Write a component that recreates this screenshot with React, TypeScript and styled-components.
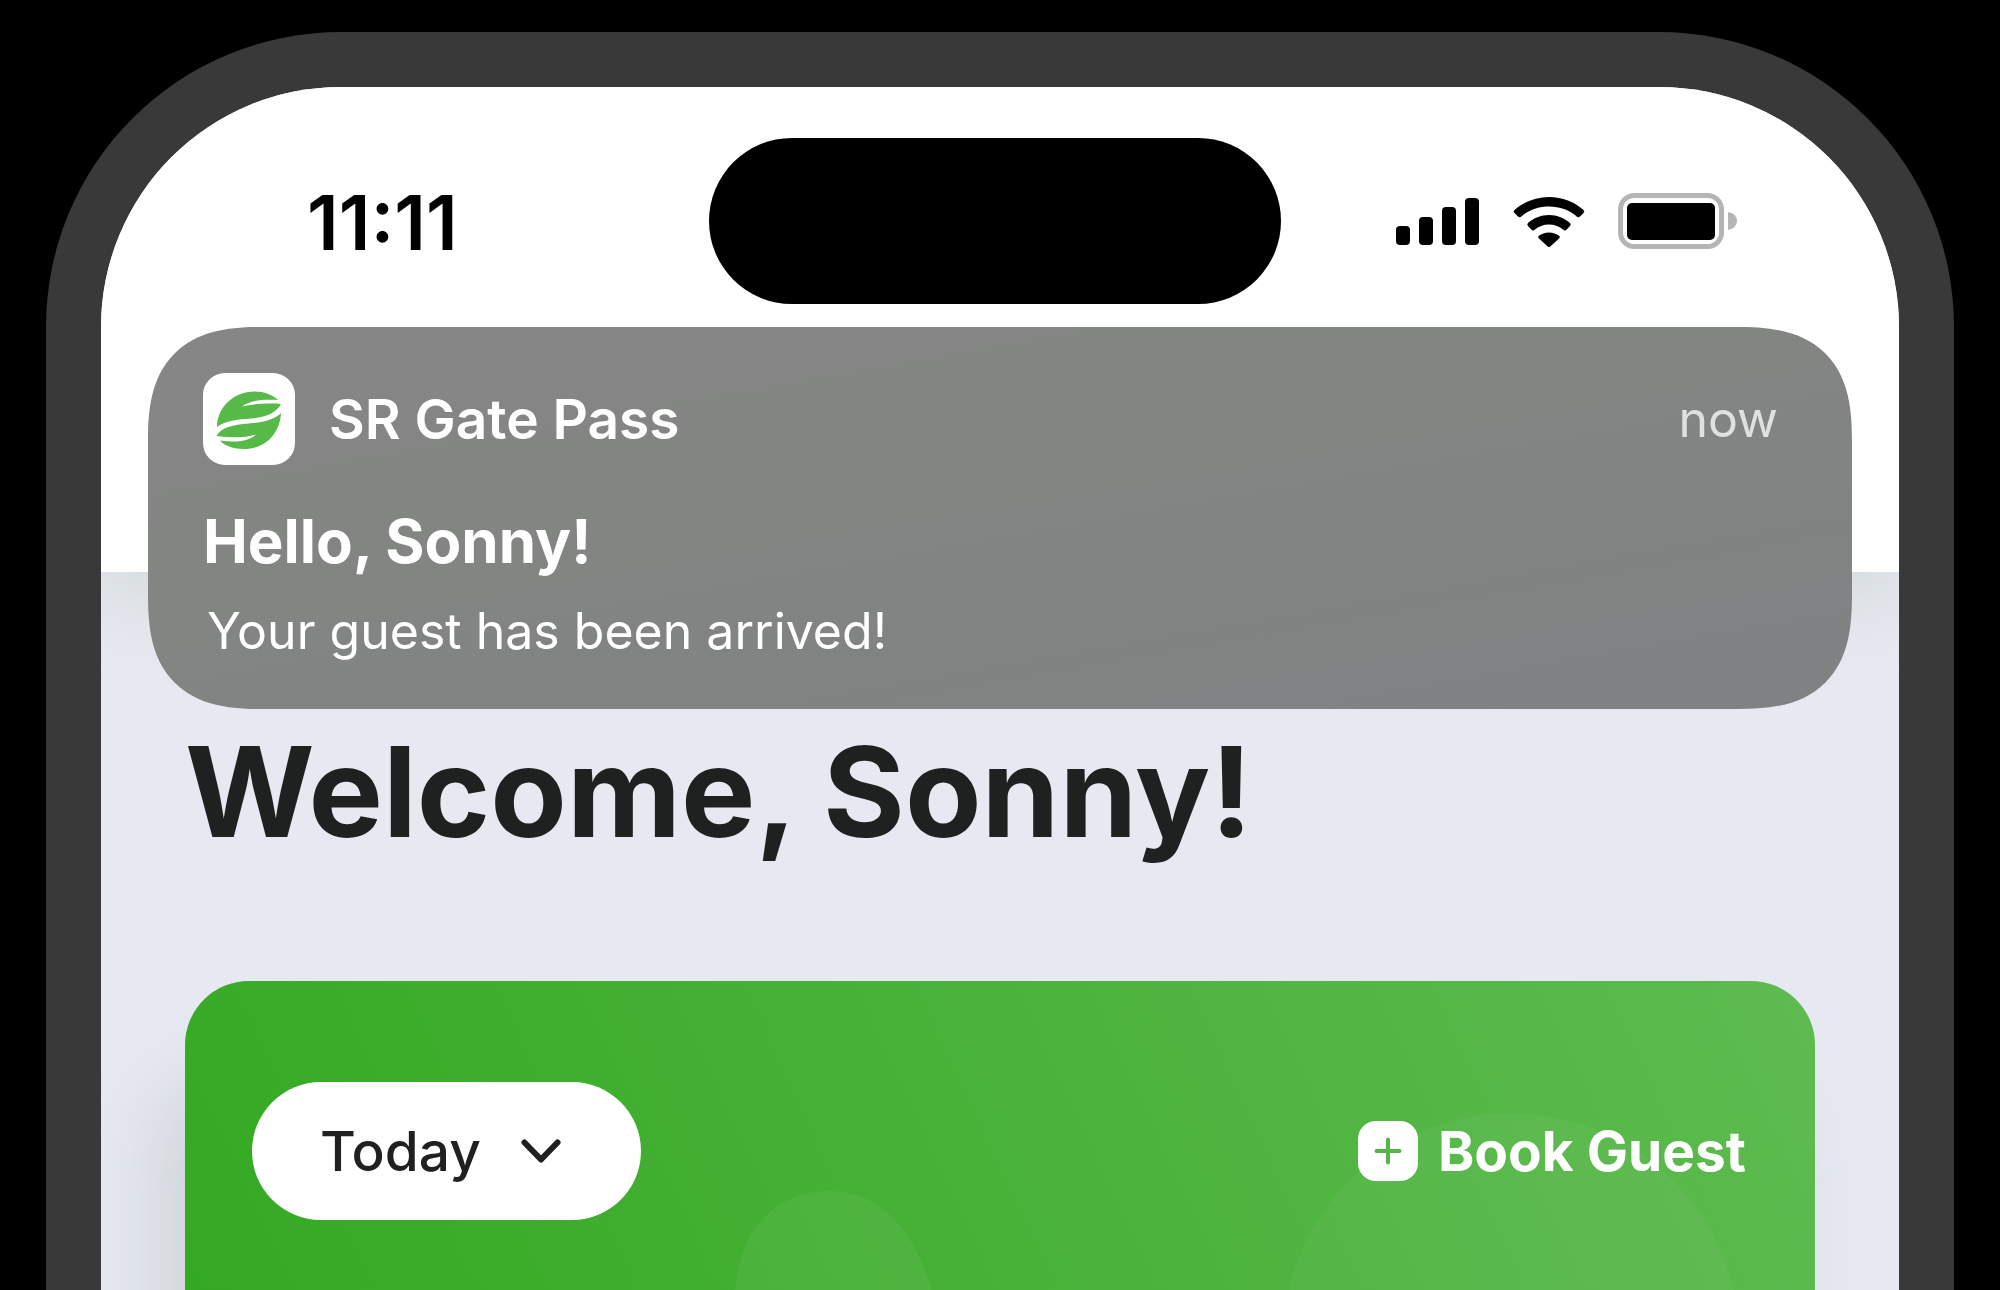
import React from "react";
import styled, { createGlobalStyle } from "styled-components";

const GlobalStyle = createGlobalStyle`
  *, *::before, *::after { box-sizing: border-box; }
  html, body { margin: 0; background: #000; }
  body {
    font-family: Inter, "Liberation Sans", sans-serif;
    -webkit-font-smoothing: antialiased;
  }
  h1, h2, p { margin: 0; }
`;

const Page = styled.div`
  display: flex;
  height: 100vh;
  padding: 32px 46px 0;
  background: #000;
  overflow: hidden;
`;

const Phone = styled.main`
  position: relative;
  display: flex;
  flex-direction: column;
  flex: 1;
  min-width: 0;
  border: 55px solid #393939;
  border-bottom: 0;
  border-radius: 295px 295px 0 0;
  background: #e6e9f1;
  overflow: hidden;
`;

const Header = styled.header`
  position: relative;
  flex: none;
  padding: 51px 10px 268px 0;
  background: #fff;
  box-shadow: 0 16px 80px rgba(200, 206, 200, 0.7);
`;

const StatusBar = styled.div`
  display: grid;
  grid-template-columns: 1fr 572px 1fr;
  height: 166px;
`;

const Time = styled.time`
  align-self: center;
  padding: 4px 0 0 206px;
  font-size: 75px;
  line-height: 88px;
  font-weight: 600;
  color: #000;
`;

const Island = styled.div`
  border-radius: 83px;
  background: #000;
`;

const StatusIcons = styled.div`
  display: flex;
  align-items: center;
  justify-content: flex-end;
  gap: 33px;
  padding-right: 151px;
`;

const Notification = styled.section`
  position: absolute;
  top: 240px;
  left: 47px;
  right: 47px;
  display: flex;
  flex-direction: column;
  padding: 46px 74px 46px 55px;
  height: 382px;
  border-radius: 92px;
  background: linear-gradient(170deg, #868686 0%, #828582 45%, #808184 100%);
  color: #fff;

  @supports (corner-shape: superellipse(1.4)) {
    border-radius: 115px;
    corner-shape: superellipse(1.4);
  }
`;

const NotificationTop = styled.div`
  display: flex;
  align-items: center;
  gap: 34px;
`;

const AppIcon = styled.div`
  display: grid;
  place-items: center;
  width: 92px;
  height: 92px;
  border-radius: 22px;
  background: #fff;
`;

const AppName = styled.span`
  flex: 1;
  font-size: 55px;
  line-height: 64px;
  font-weight: 600;
`;

const When = styled.time`
  font-size: 50px;
  line-height: 64px;
  font-weight: 400;
  color: #dfe1df;
`;

const NotificationTitle = styled.h2`
  margin-top: 36px;
  font-size: 60px;
  line-height: 80px;
  font-weight: 700;
`;

const NotificationText = styled.p`
  margin-top: 18px;
  padding-left: 4px;
  font-size: 50px;
  line-height: 64px;
  font-weight: 400;
`;

const Content = styled.div`
  position: relative;
  display: flex;
  flex-direction: column;
  flex: 1;
  padding: 140px 84px 0;
`;

const Welcome = styled.h1`
  font-size: 125px;
  line-height: 160px;
  font-weight: 700;
  color: #1f2020;
`;

const Card = styled.section`
  position: relative;
  flex: none;
  margin-top: 109px;
  height: 700px;
  padding: 101px 69px 0 67px;
  border-radius: 64px;
  background: linear-gradient(65deg, #30a71e 0%, #5ebb50 100%);
  box-shadow: -30px 100px 70px rgba(150, 160, 150, 0.25);
`;

const CardShapes = styled.svg`
  position: absolute;
  inset: 0;
`;

const CardBar = styled.div`
  position: relative;
  display: flex;
  align-items: center;
  justify-content: space-between;
`;

const DayPicker = styled.div`
  position: relative;
`;

const DaySelect = styled.select`
  appearance: none;
  height: 138px;
  padding: 0 160px 0 68px;
  border: 0;
  border-radius: 69px;
  background: #fff;
  font: inherit;
  font-size: 55px;
  line-height: 72px;
  font-weight: 500;
  color: #1f2020;
`;

const Chevron = styled.svg`
  position: absolute;
  top: 57px;
  right: 80px;
  pointer-events: none;
`;

const BookButton = styled.button`
  display: flex;
  align-items: center;
  gap: 20px;
  padding: 0;
  border: 0;
  background: none;
  font: inherit;
  font-size: 55px;
  line-height: 72px;
  font-weight: 700;
  color: #fff;
`;

const SignalIcon = () => (
  <svg width="84" height="47" viewBox="0 0 84 47" aria-hidden="true">
    <rect x="0" y="28" width="14" height="19" rx="4" />
    <rect x="23" y="19" width="14" height="28" rx="4" />
    <rect x="46" y="9" width="14" height="38" rx="4" />
    <rect x="69" y="0" width="14" height="47" rx="4" />
  </svg>
);

const WifiIcon = () => (
  <svg width="72" height="54" viewBox="0 -3 72 54" aria-hidden="true">
    <path d="M36 0C49.500 0 61.500 5 70.500 13Q72 14.500 70.500 16L67 19.500Q65.500 21 64 19.700C56.500 13 46.500 9.500 36 9.500S15.500 13 8 19.700Q6.500 21 5 19.500L1.500 16Q0 14.500 1.500 13C10.500 5 22.500 0 36 0Z" />
    <path d="M36 18C44 18 51.500 21 57 26Q58.500 27.500 57 29L53.200 33Q52 34.200 50.300 32.800C46.500 29.500 41.500 27.500 36 27.500S25.500 29.500 21.700 32.800Q20 34.200 18.800 33L15 29Q13.500 27.500 15 26C20.500 21 28 18 36 18Z" />
    <path d="M36 35.500C40 35.500 43.500 36.800 46.200 38.800Q47.500 40 46.300 41.200L37.300 49.500Q36 50.700 34.700 49.500L25.700 41.200Q24.500 40 25.800 38.800C28.500 36.800 32 35.500 36 35.500Z" />
  </svg>
);

const BatteryIcon = () => (
  <svg width="120" height="56" viewBox="0 0 120 56" aria-hidden="true">
    <rect x="2.500" y="2.500" width="101" height="51" rx="14" fill="none" stroke="#b5b5b5" strokeWidth="5" />
    <rect x="9" y="10" width="88" height="37" rx="5" />
    <path d="M110 19Q119 21 119 28Q119 35 110 37Z" fill="#b5b5b5" />
  </svg>
);

const LeafIcon = () => (
  <svg width="92" height="92" viewBox="0 0 92 92" aria-hidden="true">
    <path
      fill="#57b947"
      d="M14 54C14 36 29 18.500 52 18.500C61 18.500 69 21.500 75 27C62 26 47 27 39 33.500C51 30.500 65 30 78 31C73 40 63 44.500 48 45.500C34 46.500 23 47.500 14 54Z"
    />
    <path
      fill="#57b947"
      d="M78 40C77 60 63 76 41 76C30 76 22 73 17 67.500C31 69.500 45 69 53 61.500C41 65 28 65 13.500 63C18 54 30 52 46 50.500C60 49.500 71 47 78 40Z"
    />
  </svg>
);

const PlusIcon = () => (
  <svg width="60" height="60" viewBox="0 0 60 60" aria-hidden="true">
    <rect width="60" height="60" rx="18" fill="#fff" />
    <path d="M30 18.500V41.500M18.500 30H41.500" stroke="#55b647" strokeWidth="4" strokeLinecap="round" />
  </svg>
);

export default function App() {
  return (
    <>
      <GlobalStyle />
      <Page>
        <Phone>
          <Header>
            <StatusBar>
              <Time>11:11</Time>
              <Island />
              <StatusIcons>
                <SignalIcon />
                <WifiIcon />
                <BatteryIcon />
              </StatusIcons>
            </StatusBar>
          </Header>
          <Content>
            <Welcome>Welcome, Sonny!</Welcome>
            <Card>
              <CardShapes width="1630" height="700" viewBox="0 0 1630 700" aria-hidden="true">
                <circle cx="1326" cy="360" r="228" fill="#fff" fillOpacity="0.04" />
                <path
                  d="M550 320C550 250 590 210 645 210C705 210 738 265 752 330L760 400H550Z"
                  fill="#fff"
                  fillOpacity="0.05"
                />
              </CardShapes>
              <CardBar>
                <DayPicker>
                  <DaySelect aria-label="Day">
                    <option>Today</option>
                  </DaySelect>
                  <Chevron width="40" height="25" viewBox="0 0 40 25" aria-hidden="true">
                    <path d="M3.500 3.500L20 20.500L36.500 3.500" fill="none" stroke="#1f2020" strokeWidth="6" strokeLinecap="round" strokeLinejoin="round" />
                  </Chevron>
                </DayPicker>
                <BookButton type="button">
                  <PlusIcon />
                  Book Guest
                </BookButton>
              </CardBar>
            </Card>
          </Content>
          <Notification>
            <NotificationTop>
              <AppIcon>
                <LeafIcon />
              </AppIcon>
              <AppName>SR Gate Pass</AppName>
              <When>now</When>
            </NotificationTop>
            <NotificationTitle>Hello, Sonny!</NotificationTitle>
            <NotificationText>Your guest has been arrived!</NotificationText>
          </Notification>
        </Phone>
      </Page>
    </>
  );
}
